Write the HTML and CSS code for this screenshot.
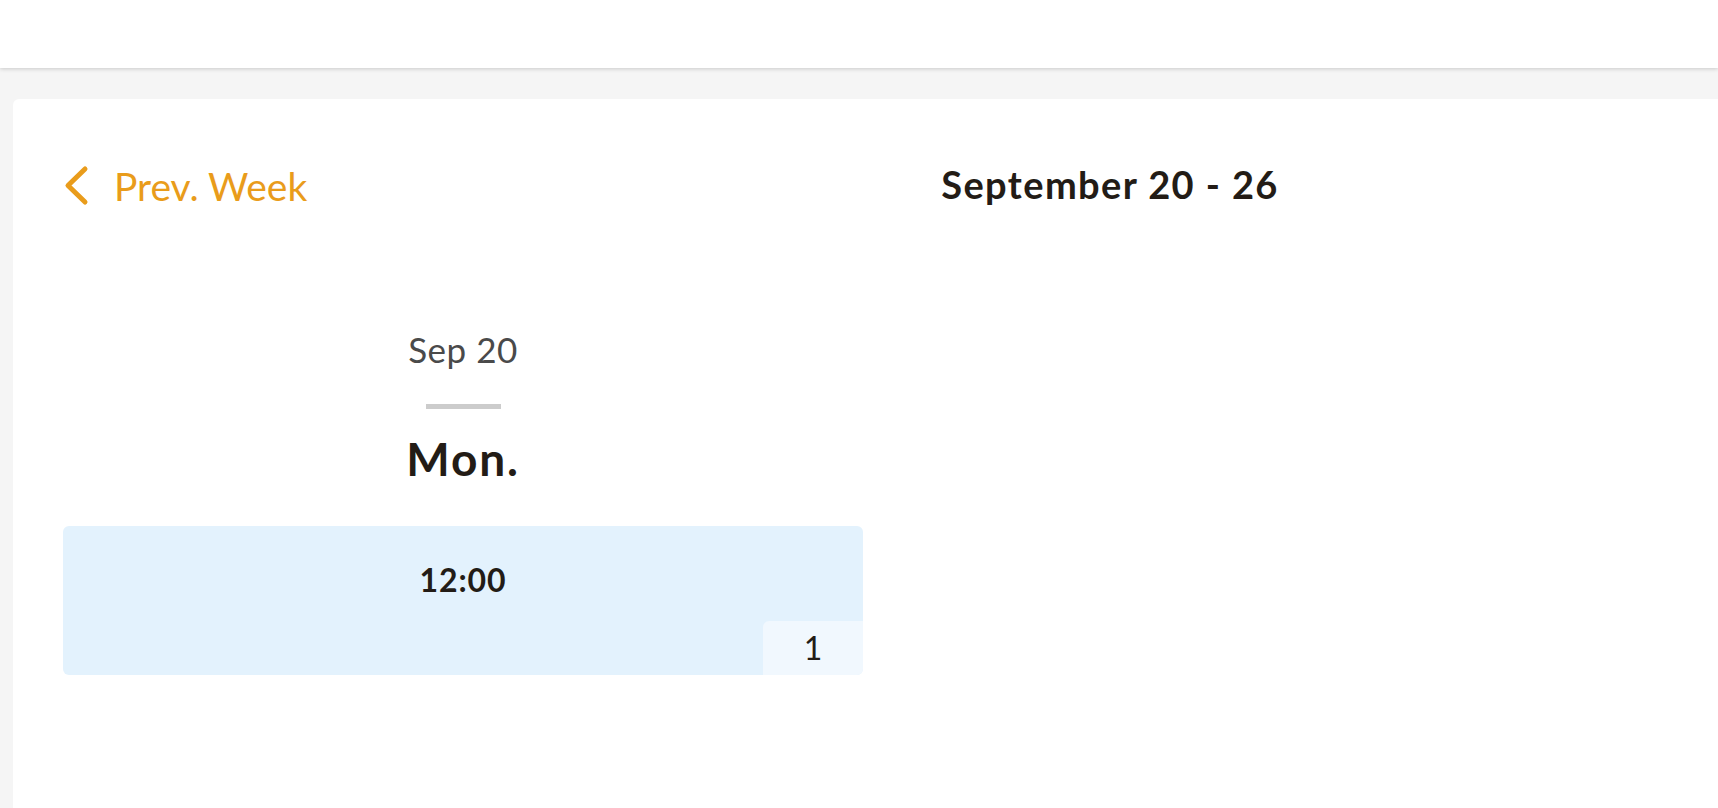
FILE: index.html
```html
<!DOCTYPE html>
<html lang="en">
<head>
<meta charset="utf-8">
<title>Week</title>
<link rel="stylesheet" href="styles.css">
</head>
<body>
<header class="topbar"></header>
<main class="page">
  <section class="card">
    <div class="week-nav">
      <a class="prev" href="#">
        <svg class="chev" width="27" height="41" viewBox="0 0 27 41" aria-hidden="true">
          <path d="M22 4 L5 20.5 L22 37" fill="none" stroke="#e99c1b" stroke-width="5" stroke-linecap="round" stroke-linejoin="round"/>
        </svg>
        <span>Prev. Week</span>
      </a>
      <h1 class="range">September 20 - 26</h1>
      <div class="next"></div>
    </div>
    <div class="days">
      <div class="day">
        <div class="date">Sep 20</div>
        <div class="rule"></div>
        <div class="dow">Mon.</div>
        <div class="slot">
          <div class="time">12:00</div>
          <div class="count">1</div>
        </div>
      </div>
    </div>
  </section>
</main>
</body>
</html>
```
FILE: styles.css
```css
* { box-sizing: border-box; }
html, body { margin: 0; padding: 0; }
body {
  background: #f5f5f5;
  font-family: Lato, "Open Sans", sans-serif;
  color: #231c16;
  overflow: hidden;
  height: 808px;
}
.topbar {
  height: 68px;
  background: #ffffff;
  box-shadow: 0 1px 4px rgba(0,0,0,0.18);
  position: relative;
  z-index: 1;
}
.page {
  padding: 31px 0 0 13px;
  height: 740px;
  overflow: hidden;
}
.card {
  width: 100%;
  height: 709px;
  background: #ffffff;
  border-radius: 6px 0 0 0;
  padding: 68px 0 0 50px;
  overflow: hidden;
}
.week-nav {
  display: grid;
  grid-template-columns: 1fr auto 1fr;
  align-items: center;
  width: 2094px;
  height: 39px;
}
.prev {
  display: flex;
  align-items: center;
  text-decoration: none;
  color: #e99c1b;
  font-size: 39px;
  line-height: 39px;
  justify-self: start;
}
.chev { margin-right: 24px; margin-top: -2px; }
.range {
  margin: -4px 0 0 0;
  font-size: 38px;
  line-height: 39px;
  font-weight: 700;
  letter-spacing: 1.4px;
  color: #231c16;
}
.days {
  display: flex;
  margin-top: 123px;
}
.day {
  width: 800px;
  display: flex;
  flex-direction: column;
  align-items: center;
}
.date {
  font-size: 35px;
  line-height: 40px;
  letter-spacing: 0.5px;
  color: #4a4a4a;
}
.rule {
  width: 75px;
  height: 5px;
  background: #cccccc;
  margin-top: 35px;
}
.dow {
  margin-top: 25px;
  font-size: 46px;
  line-height: 50px;
  font-weight: 700;
  letter-spacing: 1.8px;
}
.slot {
  position: relative;
  margin-top: 42px;
  width: 100%;
  height: 149px;
  background: #e3f2fd;
  border-radius: 6px;
  padding-top: 34px;
  text-align: center;
}
.time {
  font-size: 32px;
  line-height: 40px;
  font-weight: 700;
  letter-spacing: 0.9px;
}
.count {
  position: absolute;
  right: 0;
  bottom: 0;
  width: 100px;
  height: 54px;
  background: #f1f8fe;
  border-radius: 6px 0 6px 0;
  font-size: 32px;
  line-height: 54px;
  text-align: center;
}
```
